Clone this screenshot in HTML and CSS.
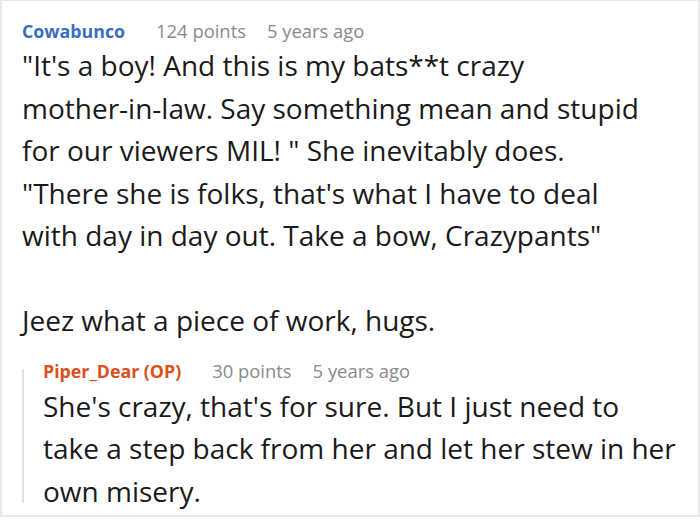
FILE: index.html
```html
<!DOCTYPE html>
<html>
<head>
<meta charset="utf-8">
<link rel="stylesheet" href="styles.css">
</head>
<body>
<div class="card">
  <div class="comment">
    <div class="meta">
      <span class="author">Cowabunco</span>
      <span class="info">124 points</span>
      <span class="info">5 years ago</span>
    </div>
    <div class="text">
      <p>"It's a boy! And this is my bats**t crazy <span class="nowrap">mother-in-law.</span> Say something mean and stupid for our viewers MIL! " She inevitably does. "There she is folks, that's what I have to deal with day in day out. Take a bow, Crazypants"</p>
      <p>Jeez what a piece of work, hugs.</p>
    </div>
    <div class="reply">
      <div class="meta">
        <span class="author op">Piper_Dear (OP)</span>
        <span class="info">30 points</span>
        <span class="info">5 years ago</span>
      </div>
      <div class="text">
        <p>She's crazy, that's for sure. But I just need to take a step back from her and let her stew in her own misery.</p>
      </div>
    </div>
  </div>
</div>
</body>
</html>
```

FILE: styles.css
```css
html, body {
  margin: 0;
  padding: 0;
  background: #ffffff;
}
body {
  font-family: "Open Sans", "Noto Sans", sans-serif;
  color: #1a1a1a;
}
.card {
  width: 700px;
  height: 517px;
  box-sizing: border-box;
  border: 2px solid #e8e8e8;
  border-top-width: 1px;
  overflow: hidden;
}
.comment {
  padding: 17px 40px 0 20px;
}
.meta {
  display: flex;
  align-items: baseline;
  gap: 21px;
  font-size: 18.4px;
  line-height: 26px;
}
.author {
  font-size: 17.8px;
  font-weight: 700;
  color: #3a6ec0;
  margin-right: 10px;
}
.author.op {
  color: #d9501e;
}
.info {
  color: #8a8a8a;
}
.text {
  font-size: 28px;
  line-height: 42.5px;
  color: #1a1a1a;
}
.text p {
  margin: 0;
}
.text p + p {
  margin-top: 42.5px;
}
.nowrap {
  white-space: nowrap;
}
.reply {
  margin-top: 16px;
  margin-right: -21px;
  padding-left: 21px;
  background: linear-gradient(#e3e3e3, #e3e3e3) no-repeat 0 11px / 2px calc(100% - 20px);
}
.reply .text {
  margin-top: 1px;
}
```
